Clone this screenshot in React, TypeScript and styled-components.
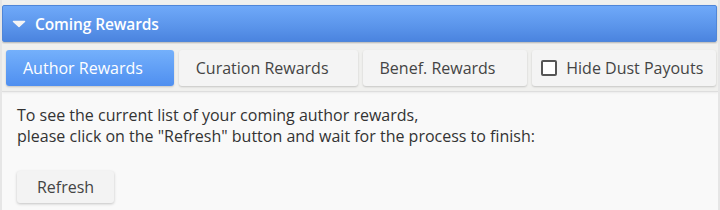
import React, { useState } from 'react';
import styled, { createGlobalStyle } from 'styled-components';

const GlobalStyle = createGlobalStyle`
  html, body {
    margin: 0;
    padding: 0;
    background: #f9f9f9;
    font-family: "Open Sans", "Liberation Sans", sans-serif;
  }
`;

const Panel = styled.div`
  width: 720px;
  height: 210px;
  box-sizing: border-box;
  background: #f9f9f9;
  border-left: 2px solid #e6e6e6;
  border-right: 2px solid #e6e6e6;
  overflow: hidden;
`;

const HeaderWrap = styled.div`
  background: #f0f0ee;
  padding: 5px 1px 2px 0;
`;

const Header = styled.div`
  height: 37px;
  box-sizing: border-box;
  display: flex;
  align-items: center;
  gap: 8px;
  padding-left: 8px;
  background: linear-gradient(to bottom, #6fa9f9 0%, #5a94ea 60%, #4b84df 100%);
  border: 1px solid #4f86d8;
  border-radius: 2px;
  box-shadow: 0 1px 2px rgba(0, 0, 0, 0.25);
  color: #fff;
  font-size: 15.5px;
  font-weight: 600;
  letter-spacing: -0.1px;
`;

const TabRow = styled.div`
  display: flex;
  gap: 5px;
  padding: 6px 2px 5px 4px;
  background: #f0f0ee;
  border-bottom: 1px solid #dedede;
  box-shadow: 0 1px 2px rgba(0, 0, 0, 0.06);
`;

const Tab = styled.button<{ $active?: boolean; $w: number; $pad?: number }>`
  width: ${(p) => p.$w}px;
  height: 36px;
  display: flex;
  align-items: center;
  justify-content: flex-start;
  gap: 9px;
  padding: 0 0 0 ${(p) => p.$pad ?? 17}px;
  border: none;
  border-radius: 3px;
  font-family: inherit;
  font-size: 16px;
  cursor: pointer;
  color: ${(p) => (p.$active ? '#fff' : '#444')};
  background: ${(p) =>
    p.$active ? 'linear-gradient(to bottom, #74b0fb, #4f8ff0)' : '#f4f4f4'};
  box-shadow: 0 1px 2px rgba(0, 0, 0, 0.18);
`;

const Box = styled.span`
  width: 12px;
  height: 12px;
  border: 2px solid #555;
  border-radius: 2px;
  background: #fff;
`;

const Body = styled.div`
  padding: 13px 15px;
  color: #333;
  font-size: 16px;
  line-height: 21px;
`;

const Text = styled.p`
  margin: 0 0 24px;
`;

const RefreshButton = styled.button`
  width: 97px;
  height: 32px;
  border: none;
  border-radius: 3px;
  background: #f3f3f3;
  color: #444;
  font-family: inherit;
  font-size: 16px;
  box-shadow: 0 1px 3px rgba(0, 0, 0, 0.22);
  cursor: pointer;
`;

const tabs = [
  { key: 'author', label: 'Author Rewards', w: 168 },
  { key: 'curation', label: 'Curation Rewards', w: 179 },
  { key: 'benef', label: 'Benef. Rewards', w: 165 },
];

export default function App() {
  const [active, setActive] = useState('author');

  return (
    <>
      <GlobalStyle />
      <Panel>
        <HeaderWrap>
          <Header>
            <svg width="16" height="10" viewBox="0 0 16 10">
              <path d="M2.5 2.5 L13.5 2.5 L8 7.5 Z" fill="#f4f4f4" stroke="#f4f4f4" strokeWidth="1.5" strokeLinejoin="round" />
            </svg>
            Coming Rewards
          </Header>
        </HeaderWrap>
        <TabRow>
          {tabs.map((t) => (
            <Tab key={t.key} $w={t.w} $active={active === t.key} onClick={() => setActive(t.key)}>
              {t.label}
            </Tab>
          ))}
          <Tab $w={184} $pad={9}>
            <Box />
            Hide Dust Payouts
          </Tab>
        </TabRow>
        <Body>
          <Text>
            To see the current list of your coming author rewards,
            <br />
            please click on the "Refresh" button and wait for the process to finish:
          </Text>
          <RefreshButton>Refresh</RefreshButton>
        </Body>
      </Panel>
    </>
  );
}
